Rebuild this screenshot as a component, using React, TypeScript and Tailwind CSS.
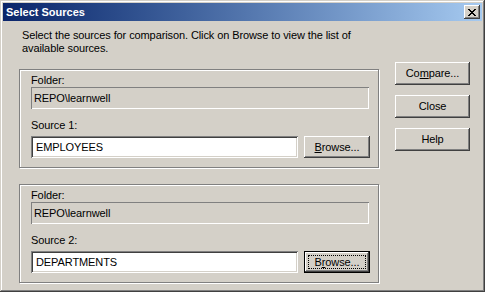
import React from "react";

const raised =
  "shadow-[inset_-1px_-1px_#404040,inset_1px_1px_#fff,inset_-2px_-2px_#808080]";
const sunken =
  "shadow-[inset_1px_1px_#808080,inset_-1px_-1px_#fff,inset_2px_2px_#404040,inset_-2px_-2px_#d4d0c8]";

type BtnProps = { children: React.ReactNode; focused?: boolean; className?: string };

const Button = ({ children, focused, className = "" }: BtnProps) => {
  if (focused) {
    return (
      <div className={`border border-black bg-[#d4d0c8] ${className}`}>
        <div className={`h-full w-full p-[3px] ${raised}`}>
          <div className="flex h-full w-full items-center justify-center border border-dotted border-black">
            {children}
          </div>
        </div>
      </div>
    );
  }
  return (
    <div className={`flex items-center justify-center bg-[#d4d0c8] ${raised} ${className}`}>
      {children}
    </div>
  );
};

type GroupProps = { label: string; value: string; focused?: boolean; accel: "B" | "r" };

const SourceGroup = ({ label, value, focused, accel }: GroupProps) => (
  <div className="flex h-[99px] w-[360px] flex-col border border-[#808080] pt-[4px] pl-[11px] shadow-[inset_1px_1px_#fff,1px_1px_#fff]">
    <div className="leading-[13px]">Folder:</div>
    <div className="flex h-[22px] w-[338px] items-center pl-[3px] shadow-[inset_1px_1px_#808080,inset_-1px_-1px_#fff]">
      REPO\learnwell
    </div>
    <div className="mt-[10px] leading-[13px]">{label}</div>
    <div className="mt-[4px] flex gap-[6px]">
      <div className={`flex h-[22px] w-[267px] items-center bg-white pl-[5px] ${sunken}`}>{value}</div>
      <Button focused={focused} className="h-[22px] w-[66px]">
        {accel === "B" ? (
          <span>
            <u>B</u>rowse...
          </span>
        ) : (
          <span>
            B<u>r</u>owse...
          </span>
        )}
      </Button>
    </div>
  </div>
);

export default function App() {
  return (
    <div
      className="flex h-[292px] w-[485px] flex-col bg-[#d4d0c8] p-[3px] text-[11px] tracking-[-0.1px] text-black shadow-[inset_-1px_-1px_#404040,inset_1px_1px_#d4d0c8,inset_-2px_-2px_#808080,inset_2px_2px_#fff]"
      style={{ fontFamily: '"Liberation Sans", Arial, sans-serif' }}
    >
      <div className="flex h-[18px] items-center justify-between bg-linear-to-r from-[#0a246a] to-[#a6caf0] pr-[2px] pl-[3px]">
        <span className="text-[11px] font-bold tracking-normal text-white">Select Sources</span>
        <div className={`flex h-[14px] w-[16px] items-center justify-center bg-[#d4d0c8] ${raised}`}>
          <svg width="8" height="7" viewBox="0 0 8 7" shapeRendering="crispEdges">
            <path d="M0 0h2v1H0zM6 0h2v1H6zM1 1h2v1H1zM5 1h2v1H5zM2 2h4v1H2zM3 3h2v1H3zM2 4h4v1H2zM1 5h2v1H1zM5 5h2v1H5zM0 6h2v1H0zM6 6h2v1H6z" fill="#000" />
          </svg>
        </div>
      </div>
      <div className="flex flex-1">
        <div className="ml-[16px] flex flex-col">
          <p className="mt-[8px] w-[340px] pl-[3px] leading-[13px]">
            Select the sources for comparison. Click on Browse to view the list of available sources.
          </p>
          <div className="mt-[14px]">
            <SourceGroup label="Source 1:" value="EMPLOYEES" accel="B" />
          </div>
          <div className="mt-[16px]">
            <SourceGroup label="Source 2:" value="DEPARTMENTS" focused accel="r" />
          </div>
        </div>
        <div className="mt-[41px] ml-[16px] flex flex-col gap-[10px]">
          <Button className="h-[23px] w-[75px]">
            <span>
              Co<u>m</u>pare...
            </span>
          </Button>
          <Button className="h-[23px] w-[75px]">Close</Button>
          <Button className="h-[23px] w-[75px]">Help</Button>
        </div>
      </div>
    </div>
  );
}
